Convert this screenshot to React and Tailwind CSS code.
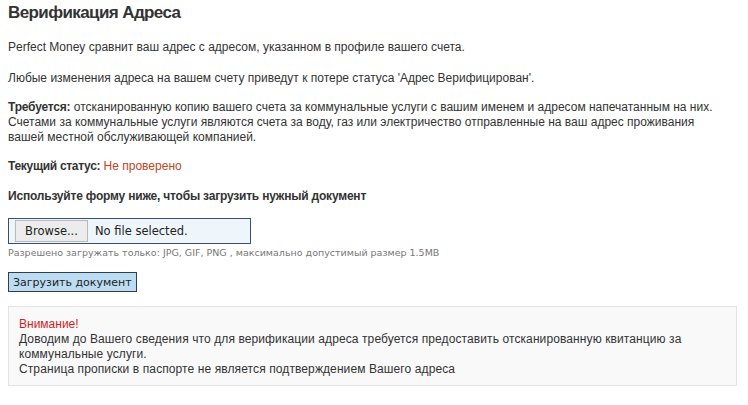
import React from 'react';

// Address verification page
export default function App() {
  return (
    <div className="min-h-[405px] bg-white px-[8px] pt-[2px] font-['Liberation_Sans',Arial,sans-serif] text-[12px] leading-[15px] text-[#333]">
      <h1 className="text-[17px] font-bold leading-[22px] tracking-[-0.6px] text-[#333]">Верификация Адреса</h1>

      <p className="mt-[16px]">Perfect Money сравнит ваш адрес с адресом, указанном в профиле вашего счета.</p>

      <p className="mt-[16px]">Любые изменения адреса на вашем счету приведут к потере статуса 'Адрес Верифицирован'.</p>

      <p className="mt-[14px]">
        <b className="tracking-[-0.2px]">Требуется:</b> отсканированную копию вашего счета за коммунальные услуги с вашим именем и адресом напечатанным на них.
        <br />
        Счетами за коммунальные услуги являются счета за воду, газ или электричество отправленные на ваш адрес проживания
        <br />
        вашей местной обслуживающей компанией.
      </p>

      <p className="mt-[14px]">
        <b className="tracking-[-0.3px]">Текущий статус:</b> <span className="text-[#c0441f]">Не проверено</span>
      </p>

      <p className="mt-[15px] font-bold tracking-[-0.2px]">Используйте форму ниже, чтобы загрузить нужный документ</p>

      <div className="mt-[14px] flex h-[26px] w-[243px] items-center border border-[#3a5068] bg-[#eef6fb] pl-[6px] font-['DejaVu_Sans',Verdana,sans-serif] text-[11.5px] text-[#222]">
        <span className="flex h-[22px] w-[73px] items-center justify-center border border-[#b9b9b9] bg-[#ececec]">Browse...</span>
        <span className="ml-[7px]">No file selected.</span>
      </div>

      <div className="mt-[2px] font-['DejaVu_Sans',Verdana,sans-serif] text-[9.5px] leading-[14px] text-[#777]">
        Разрешено загружать только: JPG, GIF, PNG , максимально допустимый размер 1.5MB
      </div>

      <button className="mt-[12px] flex h-[20px] items-center border border-[#2f3f4f] bg-[#bcdcf2] px-[4px] font-['DejaVu_Sans',Verdana,sans-serif] text-[11px] text-[#222]">
        Загрузить документ
      </button>

      <div className="mr-[3px] mt-[14px] border border-[#e3e3e3] bg-[#f9f9fa] px-[10px] pb-[8px] pt-[10px]">
        <div className="text-[#cc1f1f]">Внимание!</div>
        <div className="tracking-[0.1px]">
          Доводим до Вашего сведения что для верификации адреса требуется предоставить отсканированную квитанцию за
          <br />
          коммунальные услуги.
          <br />
          Страница прописки в паспорте не является подтверждением Вашего адреса
        </div>
      </div>
    </div>
  );
}
